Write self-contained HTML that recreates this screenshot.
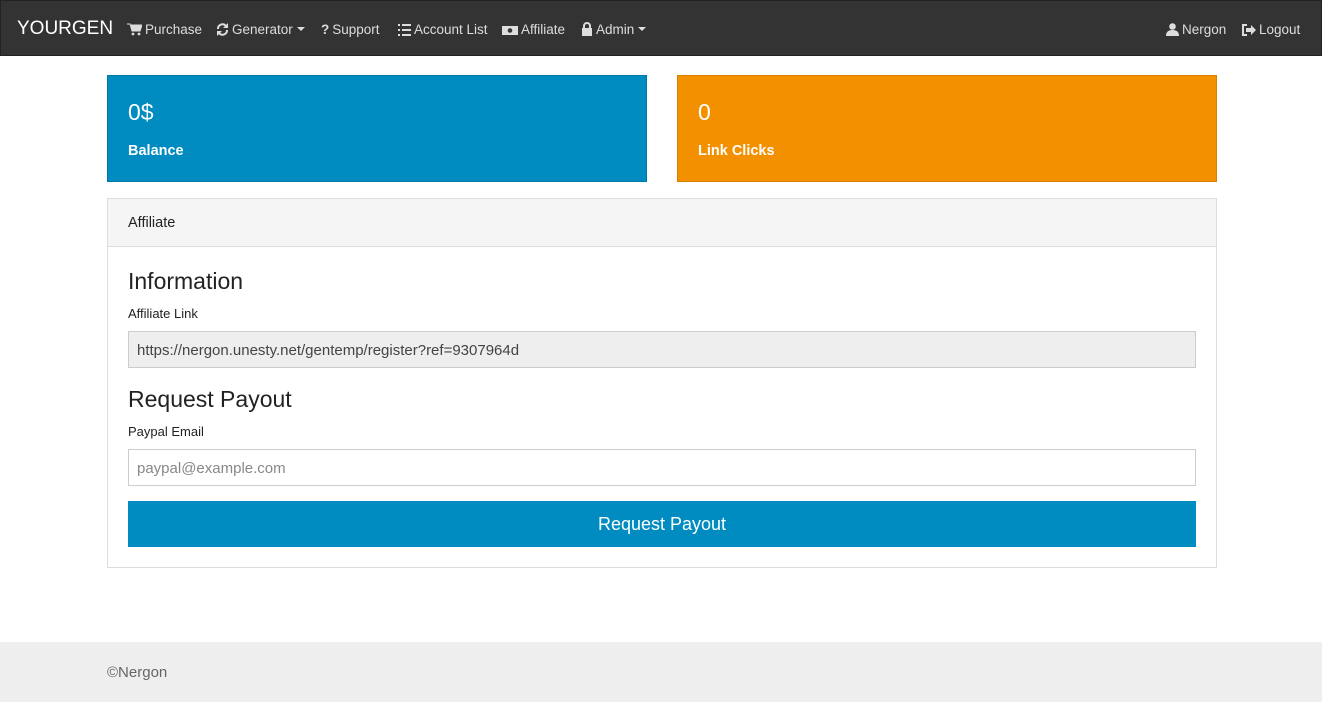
<!DOCTYPE html>
<html><head><style>
*{box-sizing:border-box;margin:0;padding:0}
body{width:1322px;height:702px;font-family:"Liberation Sans",sans-serif;background:#fff;position:relative;overflow:hidden;color:#222}
.nav{position:absolute;left:0;top:0;width:1322px;height:56px;background:#333;border:1px solid #222}
.brand{position:absolute;left:16px;top:17px;color:#fff;font-size:19px}
.ni{position:absolute;top:21px;color:#ddd;font-size:13.5px;white-space:nowrap}
.ni svg{vertical-align:-2px;margin-right:3px}
.car{display:inline-block;border-left:4px solid transparent;border-right:4px solid transparent;border-top:4px solid #ddd;vertical-align:3px;margin-left:4px}
.box{position:absolute;top:75px;width:540px;height:107px;color:#fff}
.box .n{position:absolute;left:20px;top:23px;font-size:23px}
.box .l{position:absolute;left:20px}
.card{position:absolute;left:107px;top:198px;width:1110px;height:370px;border:1px solid #ddd}
.ch{height:48px;background:#f5f5f5;border-bottom:1px solid #ddd;padding:16px 20px;font-size:14.5px}
.t{position:absolute;left:20px;font-size:23px;color:#222}
.lb{position:absolute;left:20px;font-size:13px}
.in{position:absolute;left:20px;width:1068px;height:37px;border:1px solid #ccc;padding:10px 8px;font-size:15px}
.btn{position:absolute;left:20px;top:302px;width:1068px;height:46px;background:#008cc0;color:#fff;font-size:18px;text-align:center;line-height:47px}
.foot{position:absolute;left:0;top:642px;width:1322px;height:60px;background:#eee;color:#666;font-size:15px;padding:22px 107px}
</style></head><body>
<div class="nav">
<div class="brand">YOURGEN</div>
<div class="ni" style="left:126px"><svg width="15" height="13" viewBox="0 0 15 13"><path d="M0 1h3l2 7h8l2-6H4" fill="#ddd" stroke="#ddd"/><circle cx="6" cy="11" r="1.4" fill="#ddd"/><circle cx="12" cy="11" r="1.4" fill="#ddd"/></svg>Purchase</div>
<div class="ni" style="left:215px"><svg width="13" height="13" viewBox="0 0 13 13"><path d="M2 6a4.5 4.5 0 0 1 8-3M11 7a4.5 4.5 0 0 1-8 3" stroke="#ddd" stroke-width="2" fill="none"/><path d="M12 0v5H7zM1 13V8h5z" fill="#ddd"/></svg>Generator<span class="car"></span></div>
<div class="ni" style="left:320px"><b style="margin-right:3px">?</b>Support</div>
<div class="ni" style="left:397px"><svg width="13" height="12" viewBox="0 0 13 12"><path d="M0 1h2M4 1h9M0 6h2M4 6h9M0 11h2M4 11h9" stroke="#ddd" stroke-width="2"/></svg>Account List</div>
<div class="ni" style="left:501px"><svg width="16" height="11" viewBox="0 0 16 11"><rect x="0" y="1" width="16" height="9" fill="#ddd"/><circle cx="8" cy="5.5" r="2.3" fill="#333"/></svg>Affiliate</div>
<div class="ni" style="left:580px"><svg width="12" height="14" viewBox="0 0 12 14"><path d="M3 6V4a3 3 0 0 1 6 0v2" stroke="#ddd" stroke-width="2" fill="none"/><rect x="1" y="6" width="10" height="8" fill="#ddd"/></svg>Admin<span class="car"></span></div>
<div class="ni" style="left:1165px"><svg width="13" height="13" viewBox="0 0 13 13"><circle cx="6.5" cy="3.5" r="3.3" fill="#ddd"/><path d="M0 13q0-6 6.5-6t6.5 6z" fill="#ddd"/></svg>Nergon</div>
<div class="ni" style="left:1241px"><svg width="14" height="12" viewBox="0 0 14 12"><path d="M5 1H1v10h4" stroke="#ddd" stroke-width="2" fill="none"/><path d="M4 4h5V1l5 5-5 5V8H4z" fill="#ddd"/></svg>Logout</div>
</div>
<div class="box" style="left:107px;background:#008cc0;border:1px solid #0079a8"><div class="n">0$</div><div class="l" style="top:67px;font-size:14.5px;font-weight:bold">Balance</div></div>
<div class="box" style="left:677px;background:#f39000;border:1px solid #d98000"><div class="n">0</div><div class="l" style="top:67px;font-size:14.5px;font-weight:bold">Link Clicks</div></div>
<div class="card">
<div class="ch">Affiliate</div>
<div class="t" style="top:69px">Information</div>
<div class="lb" style="top:107px">Affiliate Link</div>
<div class="in" style="top:132px;background:#eee;color:#444">https://nergon.unesty.net/gentemp/register?ref=9307964d</div>
<div class="t" style="top:187px">Request Payout</div>
<div class="lb" style="top:225px">Paypal Email</div>
<div class="in" style="top:250px;color:#888">paypal@example.com</div>
<div class="btn">Request Payout</div>
</div>
<div class="foot">©Nergon</div>
</body></html>
